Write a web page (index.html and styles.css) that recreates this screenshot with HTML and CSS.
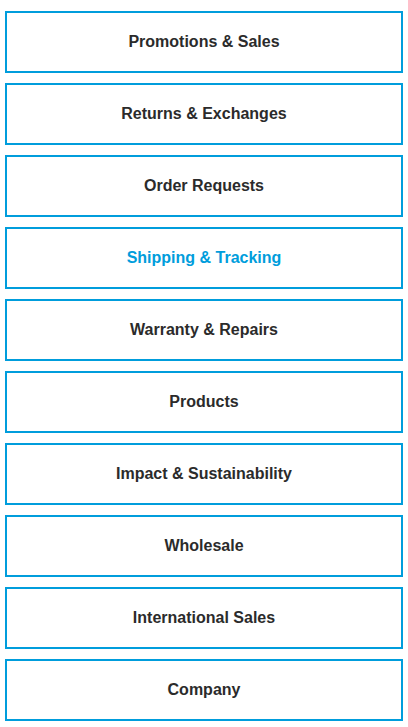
FILE: index.html
```html
<!DOCTYPE html>
<html>
<head>
<meta charset="utf-8">
<link rel="stylesheet" href="styles.css">
</head>
<body>
<nav class="menu">
  <a class="item" href="#">Promotions &amp; Sales</a>
  <a class="item" href="#">Returns &amp; Exchanges</a>
  <a class="item" href="#">Order Requests</a>
  <a class="item active" href="#">Shipping &amp; Tracking</a>
  <a class="item" href="#">Warranty &amp; Repairs</a>
  <a class="item" href="#">Products</a>
  <a class="item" href="#">Impact &amp; Sustainability</a>
  <a class="item" href="#">Wholesale</a>
  <a class="item" href="#">International Sales</a>
  <a class="item" href="#">Company</a>
</nav>
</body>
</html>
```
FILE: styles.css
```css
html, body {
  margin: 0;
  padding: 0;
  background: #ffffff;
}
body {
  font-family: "Liberation Sans", Arial, sans-serif;
}
.menu {
  display: flex;
  flex-direction: column;
  gap: 10px;
  padding: 11px 5px 0 5px;
}
.item {
  display: flex;
  align-items: center;
  justify-content: center;
  height: 62px;
  box-sizing: border-box;
  border: 2px solid #009ddc;
  color: #2b2b2b;
  font-size: 16px;
  font-weight: bold;
  text-decoration: none;
}
.item.active {
  color: #009ddc;
}
```
